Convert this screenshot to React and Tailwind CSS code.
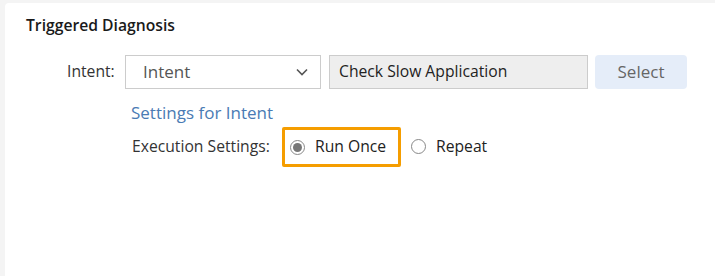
import React from "react";

export default function App() {
  return (
    <div className="w-[715px] h-[276px] bg-[#f4f4f4] pl-[5px] pt-[3px] overflow-hidden" style={{ fontFamily: '"Open Sans", sans-serif' }}>
      <div className="w-full h-full bg-white rounded-tl-[4px] pl-[21px] pt-[12px]">
        <div className="text-[15.7px] font-semibold text-[#1a1a1a] leading-[20px]">Triggered Diagnosis</div>
        <div className="flex items-center mt-[20px] pl-[41px]">
          <span className="text-[15.7px] text-[#333] w-[58px]">Intent:</span>
          <div className="w-[196px] h-[34px] border border-[#cccccc] flex items-center justify-between pl-[17px] pr-[12px]">
            <span className="text-[17px] text-[#555]">Intent</span>
            <svg width="12" height="8" viewBox="0 0 12 8" fill="none" stroke="#555" strokeWidth="1.6">
              <path d="M1 1.5l5 5 5-5" />
            </svg>
          </div>
          <div className="ml-[8px] w-[259px] h-[34px] bg-[#eeeeee] border border-[#cccccc] flex items-center pl-[9px]">
            <span className="text-[15.7px] text-[#222]">Check Slow Application</span>
          </div>
          <button className="ml-[7px] w-[92px] h-[34px] bg-[#e5edf9] rounded-[4px] text-[17px] text-[#666]">Select</button>
        </div>
        <div className="pl-[105px] mt-[13px] text-[17px] text-[#4a7bb4] leading-[22px]">Settings for Intent</div>
        <div className="flex items-center mt-[3px] pl-[106px]">
          <span className="text-[15.7px] text-[#333] w-[150px]">Execution Settings:</span>
          <div className="w-[119px] h-[40px] border-[3px] border-[#f59d00] rounded-[2px] flex items-center pl-[5px]">
            <span className="w-[15px] h-[15px] rounded-full border border-[#888] flex items-center justify-center bg-white">
              <span className="w-[9px] h-[9px] rounded-full bg-[#777]" />
            </span>
            <span className="ml-[10px] text-[15.7px] text-[#222]">Run Once</span>
          </div>
          <div className="flex items-center ml-[10px]">
            <span className="w-[15px] h-[15px] rounded-full border border-[#888] bg-white" />
            <span className="ml-[10px] text-[15.7px] text-[#222]">Repeat</span>
          </div>
        </div>
      </div>
    </div>
  );
}
